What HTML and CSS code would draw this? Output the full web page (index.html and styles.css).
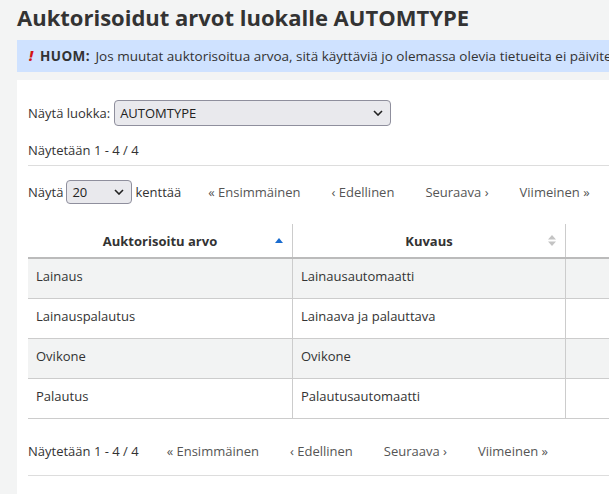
FILE: index.html
```html
<!DOCTYPE html>
<html lang="fi">
<head>
<meta charset="utf-8">
<title>Auktorisoidut arvot</title>
<link rel="stylesheet" href="styles.css">
</head>
<body>
<div class="page">
  <h1 class="title">Auktorisoidut arvot luokalle AUTOMTYPE</h1>
  <div class="alert"><span class="bang">!</span><b>HUOM:</b> Jos muutat auktorisoitua arvoa, sitä käyttäviä jo olemassa olevia tietueita ei päivitetä automaattisesti.</div>
  <div class="panel">
    <div class="row-class">
      <label class="lbl">Näytä luokka:</label>
      <span class="sel sel-wide"><span class="sel-text">AUTOMTYPE</span><svg class="chev" viewBox="0 0 10 6" width="10" height="6"><path d="M1 1 L5 5 L9 1" fill="none" stroke="#222" stroke-width="1.6"/></svg></span>
    </div>
    <div class="count">Näytetään 1 - 4 / 4</div>
    <div class="pager pager-top">
      <span class="show">Näytä <span class="sel sel-small"><span class="sel-text">20</span><svg class="chev" viewBox="0 0 10 6" width="10" height="6"><path d="M1 1 L5 5 L9 1" fill="none" stroke="#222" stroke-width="1.6"/></svg></span> kenttää</span>
      <span class="links">
        <a class="plink">« Ensimmäinen</a>
        <a class="plink">‹ Edellinen</a>
        <a class="plink">Seuraava ›</a>
        <a class="plink">Viimeinen »</a>
      </span>
    </div>
    <table class="grid">
      <thead>
        <tr>
          <th class="c1"><span class="th-in">Auktorisoitu arvo<svg class="sort" viewBox="0 0 8 5" width="8" height="5"><path d="M0 5 L4 0 L8 5 Z" fill="#1a6ccf"/></svg></span></th>
          <th class="c2"><span class="th-in">Kuvaus<svg class="sort both" viewBox="0 0 8 11" width="8" height="11"><path d="M0 4.5 L4 0 L8 4.5 Z M0 6.5 L4 11 L8 6.5 Z" fill="#c4c4c4"/></svg></span></th>
          <th class="c3"></th>
        </tr>
      </thead>
      <tbody>
        <tr class="odd"><td>Lainaus</td><td>Lainausautomaatti</td><td></td></tr>
        <tr><td>Lainauspalautus</td><td>Lainaava ja palauttava</td><td></td></tr>
        <tr class="odd"><td>Ovikone</td><td>Ovikone</td><td></td></tr>
        <tr><td>Palautus</td><td>Palautusautomaatti</td><td></td></tr>
      </tbody>
    </table>
    <div class="pager pager-bottom">
      <span class="show">Näytetään 1 - 4 / 4</span>
      <span class="links">
        <a class="plink">« Ensimmäinen</a>
        <a class="plink">‹ Edellinen</a>
        <a class="plink">Seuraava ›</a>
        <a class="plink">Viimeinen »</a>
      </span>
    </div>
  </div>
</div>
</body>
</html>
```
FILE: styles.css
```css
html, body {
  margin: 0;
  padding: 0;
  background: #f3f4f4;
  overflow: hidden;
}
body {
  font-family: "Open Sans", "Noto Sans", sans-serif;
  font-size: 13px;
  color: #333;
}
.page {
  width: 900px;
  padding: 0 0 0 17px;
}
.title {
  margin: 0;
  padding-top: 3px;
  font-size: 22px;
  line-height: 28px;
  font-weight: 700;
  color: #333;
}
.alert {
  margin-top: 9px;
  height: 32px;
  line-height: 32px;
  background: #cfe2ff;
  padding: 0 12px;
  font-size: 13.5px;
  white-space: nowrap;
  overflow: hidden;
}
.alert b {
  font-weight: 700;
  letter-spacing: 0.4px;
  margin-right: 2px;
}
.bang {
  color: #d21414;
  font-weight: 800;
  font-style: italic;
  margin-right: 7px;
}
.panel {
  margin-top: 8px;
  background: #fff;
  padding: 20px 11px 20px 11px;
  min-height: 420px;
}
.row-class {
  display: flex;
  align-items: center;
  gap: 4px;
  height: 26px;
}
.sel {
  position: relative;
  display: inline-flex;
  align-items: center;
  box-sizing: border-box;
  background: #e9e9ed;
  border: 1px solid #8f8f9d;
  border-radius: 4px;
  color: #222;
}
.sel-wide { width: 277px; height: 26px; }
.sel-small { width: 66px; height: 24px; margin: 0 3px; }
.sel-text { padding-left: 5px; }
.chev {
  position: absolute;
  right: 7px;
  top: 50%;
  margin-top: -3px;
}
.count {
  margin-top: 14px;
  height: 20px;
  line-height: 20px;
  padding-bottom: 5px;
  border-bottom: 1px solid #ddd;
}
.pager {
  display: flex;
  align-items: center;
}
.pager-top {
  margin-top: 14px;
  height: 24px;
}
.show {
  display: inline-flex;
  align-items: center;
}
.links {
  display: flex;
  gap: 31px;
  margin-left: 27px;
}
.plink {
  color: #555;
  text-decoration: none;
}
.grid {
  margin-top: 20px;
  border-collapse: collapse;
  table-layout: fixed;
  width: 800px;
}
.grid th {
  height: 33px;
  padding: 0 8px;
  font-weight: 700;
  border-right: 1px solid #ccc;
  border-bottom: 2px solid #bbb;
  text-align: center;
}
.grid th.c1 { width: 248px; }
.grid th.c2 { width: 256px; }
.th-in {
  position: relative;
  display: block;
}
.sort {
  position: absolute;
  right: 1px;
  top: 50%;
  margin-top: -3px;
}
.sort.both { margin-top: -6px; }
.grid td {
  height: 33px;
  padding: 0 8px 6px;
  border-right: 1px solid #ccc;
  border-bottom: 1px solid #ccc;
}
.grid tr.odd td { background: #f2f3f3; }
.pager-bottom {
  height: 20px;
  line-height: 20px;
  padding: 22px 0 14px;
  border-bottom: 1px solid #ddd;
}
.pager-bottom .links { margin-left: 28px; }
```
